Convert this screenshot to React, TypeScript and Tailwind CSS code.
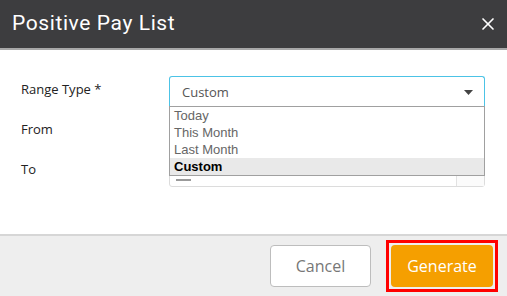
import { X } from "lucide-react";

const options = ["Today", "This Month", "Last Month", "Custom"];

function DateInput({ showIcon }: { showIcon?: boolean }) {
    return (
        <div className="flex h-[31px] w-[316px] rounded-[3px] border border-[#dcdcdc] bg-white">
            <div className="flex flex-1 items-start pl-[6px] pt-[1px]">
                {showIcon && <div className="mt-[21px] h-[2px] w-[15px] bg-[#9a9a9a]" />}
            </div>
            <div className="w-[28px] border-l border-[#e2e2e2] bg-[#fbfbfb]" />
        </div>
    );
}

export default function App() {
    return (
        <div className="flex h-[296px] w-[507px] flex-col bg-white" style={{ fontFamily: '"Open Sans", sans-serif' }}>
            {/* header */}
            <div className="flex h-[50px] items-center justify-between border-b-2 border-[#a8a8a8] bg-[#3d3d3f] pl-[12px] pr-[9px]">
                <h1 className="text-[21px] tracking-[0.6px] text-white" style={{ fontFamily: "Roboto, sans-serif" }}>
                    Positive Pay List
                </h1>
                <X className="h-[20px] w-[20px] text-white" strokeWidth={2} />
            </div>

            {/* body */}
            <div className="flex flex-1 flex-col gap-[9px] pl-[21px] pt-[26px] text-[13px] text-[#222]">
                <div className="flex">
                    <div className="w-[148px] pt-[4px]">Range Type *</div>
                    <div className="relative">
                        <div className="flex h-[31px] w-[316px] items-center justify-between rounded-t-[3px] border border-b-0 border-[#4cc3e6] pl-[12px] pr-[11px] text-[#555]">
                            <span className="pt-[2px]">Custom</span>
                            <svg width="9" height="5" viewBox="0 0 9 5" className="mt-[1px]">
                                <path d="M0 0h9L4.5 5z" fill="#444" />
                            </svg>
                        </div>
                        <div
                            className="absolute left-0 top-[30px] z-10 w-[316px] border border-[#a0a0a0] bg-white text-[13px]"
                            style={{ fontFamily: '"Liberation Sans", Arial, sans-serif' }}
                        >
                            {options.map((o) => (
                                <div
                                    key={o}
                                    className={
                                        o === "Custom"
                                            ? "h-[17px] bg-[#e9e9e9] pl-[4px] font-bold leading-[17px] text-black"
                                            : "h-[17px] pl-[4px] leading-[17px] text-[#666]"
                                    }
                                >
                                    {o}
                                </div>
                            ))}
                        </div>
                    </div>
                </div>
                <div className="flex">
                    <div className="w-[148px] pt-[4px]">From</div>
                    <DateInput />
                </div>
                <div className="flex">
                    <div className="w-[148px] pt-[4px]">To</div>
                    <DateInput showIcon />
                </div>
            </div>

            {/* footer */}
            <div className="flex h-[62px] items-center justify-end gap-[15px] border-t-2 border-[#d6d6d6] bg-[#eeeeee] pr-[9px]">
                <button className="h-[42px] w-[101px] rounded-[4px] border border-[#bdbdbd] bg-white text-[16px] text-[#777]">
                    Cancel
                </button>
                <div className="border-[3px] border-[#ff0000] p-[2px]">
                    <button className="block h-[42px] w-[102px] rounded-[4px] bg-[#f59f00] text-[16px] text-white">
                        Generate
                    </button>
                </div>
            </div>
        </div>
    );
}
